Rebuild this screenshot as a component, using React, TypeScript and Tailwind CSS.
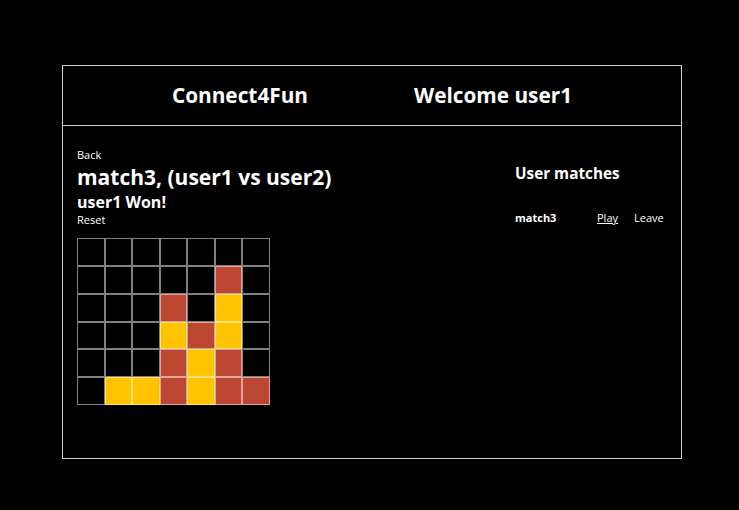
import React from "react";

const board: number[][] = [
  [0, 0, 0, 0, 0, 0, 0],
  [0, 0, 0, 0, 0, 1, 0],
  [0, 0, 0, 1, 0, 2, 0],
  [0, 0, 0, 2, 1, 2, 0],
  [0, 0, 0, 1, 2, 1, 0],
  [0, 2, 2, 1, 2, 1, 1],
];

function Cell({ v }: { v: number }) {
  const color = v === 1 ? "bg-[#bd4632]" : v === 2 ? "bg-[#ffc300]" : "bg-black";
  return <div className={`${color} border border-[rgba(255,255,255,0.5)]`} />;
}

export default function App() {
  return (
    <div
      className="min-h-[510px] w-full bg-black text-white pt-[65px] pl-[62px]"
      style={{ fontFamily: '"Open Sans", "Liberation Sans", sans-serif' }}
    >
      <div className="border border-[#d0d0d0] w-[620px] h-[394px] flex flex-col">
        <header className="h-[60px] border-b border-[#d0d0d0] flex items-center justify-center gap-[106px]">
          <h1 className="text-[20.8px] font-bold">Connect4Fun</h1>
          <h1 className="text-[20.8px] font-bold">Welcome user1</h1>
        </header>
        <div className="flex pl-[14px] pt-[22px]">
          <div className="w-[438px]">
            <div className="text-[11px] leading-[14px]">Back</div>
            <h2 className="text-[21px] font-bold leading-[31px]">match3, (user1 vs user2)</h2>
            <h3 className="text-[16px] font-bold leading-[18px]">user1 Won!</h3>
            <div className="text-[11px] leading-[17px]">Reset</div>
            <div className="grid grid-cols-7 grid-rows-6 w-[193px] h-[167px] mt-[10px]">
              {board.flat().map((v, i) => (
                <Cell key={i} v={v} />
              ))}
            </div>
          </div>
          <div className="pt-[15px]">
            <h2 className="text-[15.3px] font-bold leading-[20px]">User matches</h2>
            <div className="flex items-center mt-[27px] text-[11px]">
              <span className="font-bold w-[82px]">match3</span>
              <span className="underline w-[37px]">Play</span>
              <span>Leave</span>
            </div>
          </div>
        </div>
      </div>
    </div>
  );
}
